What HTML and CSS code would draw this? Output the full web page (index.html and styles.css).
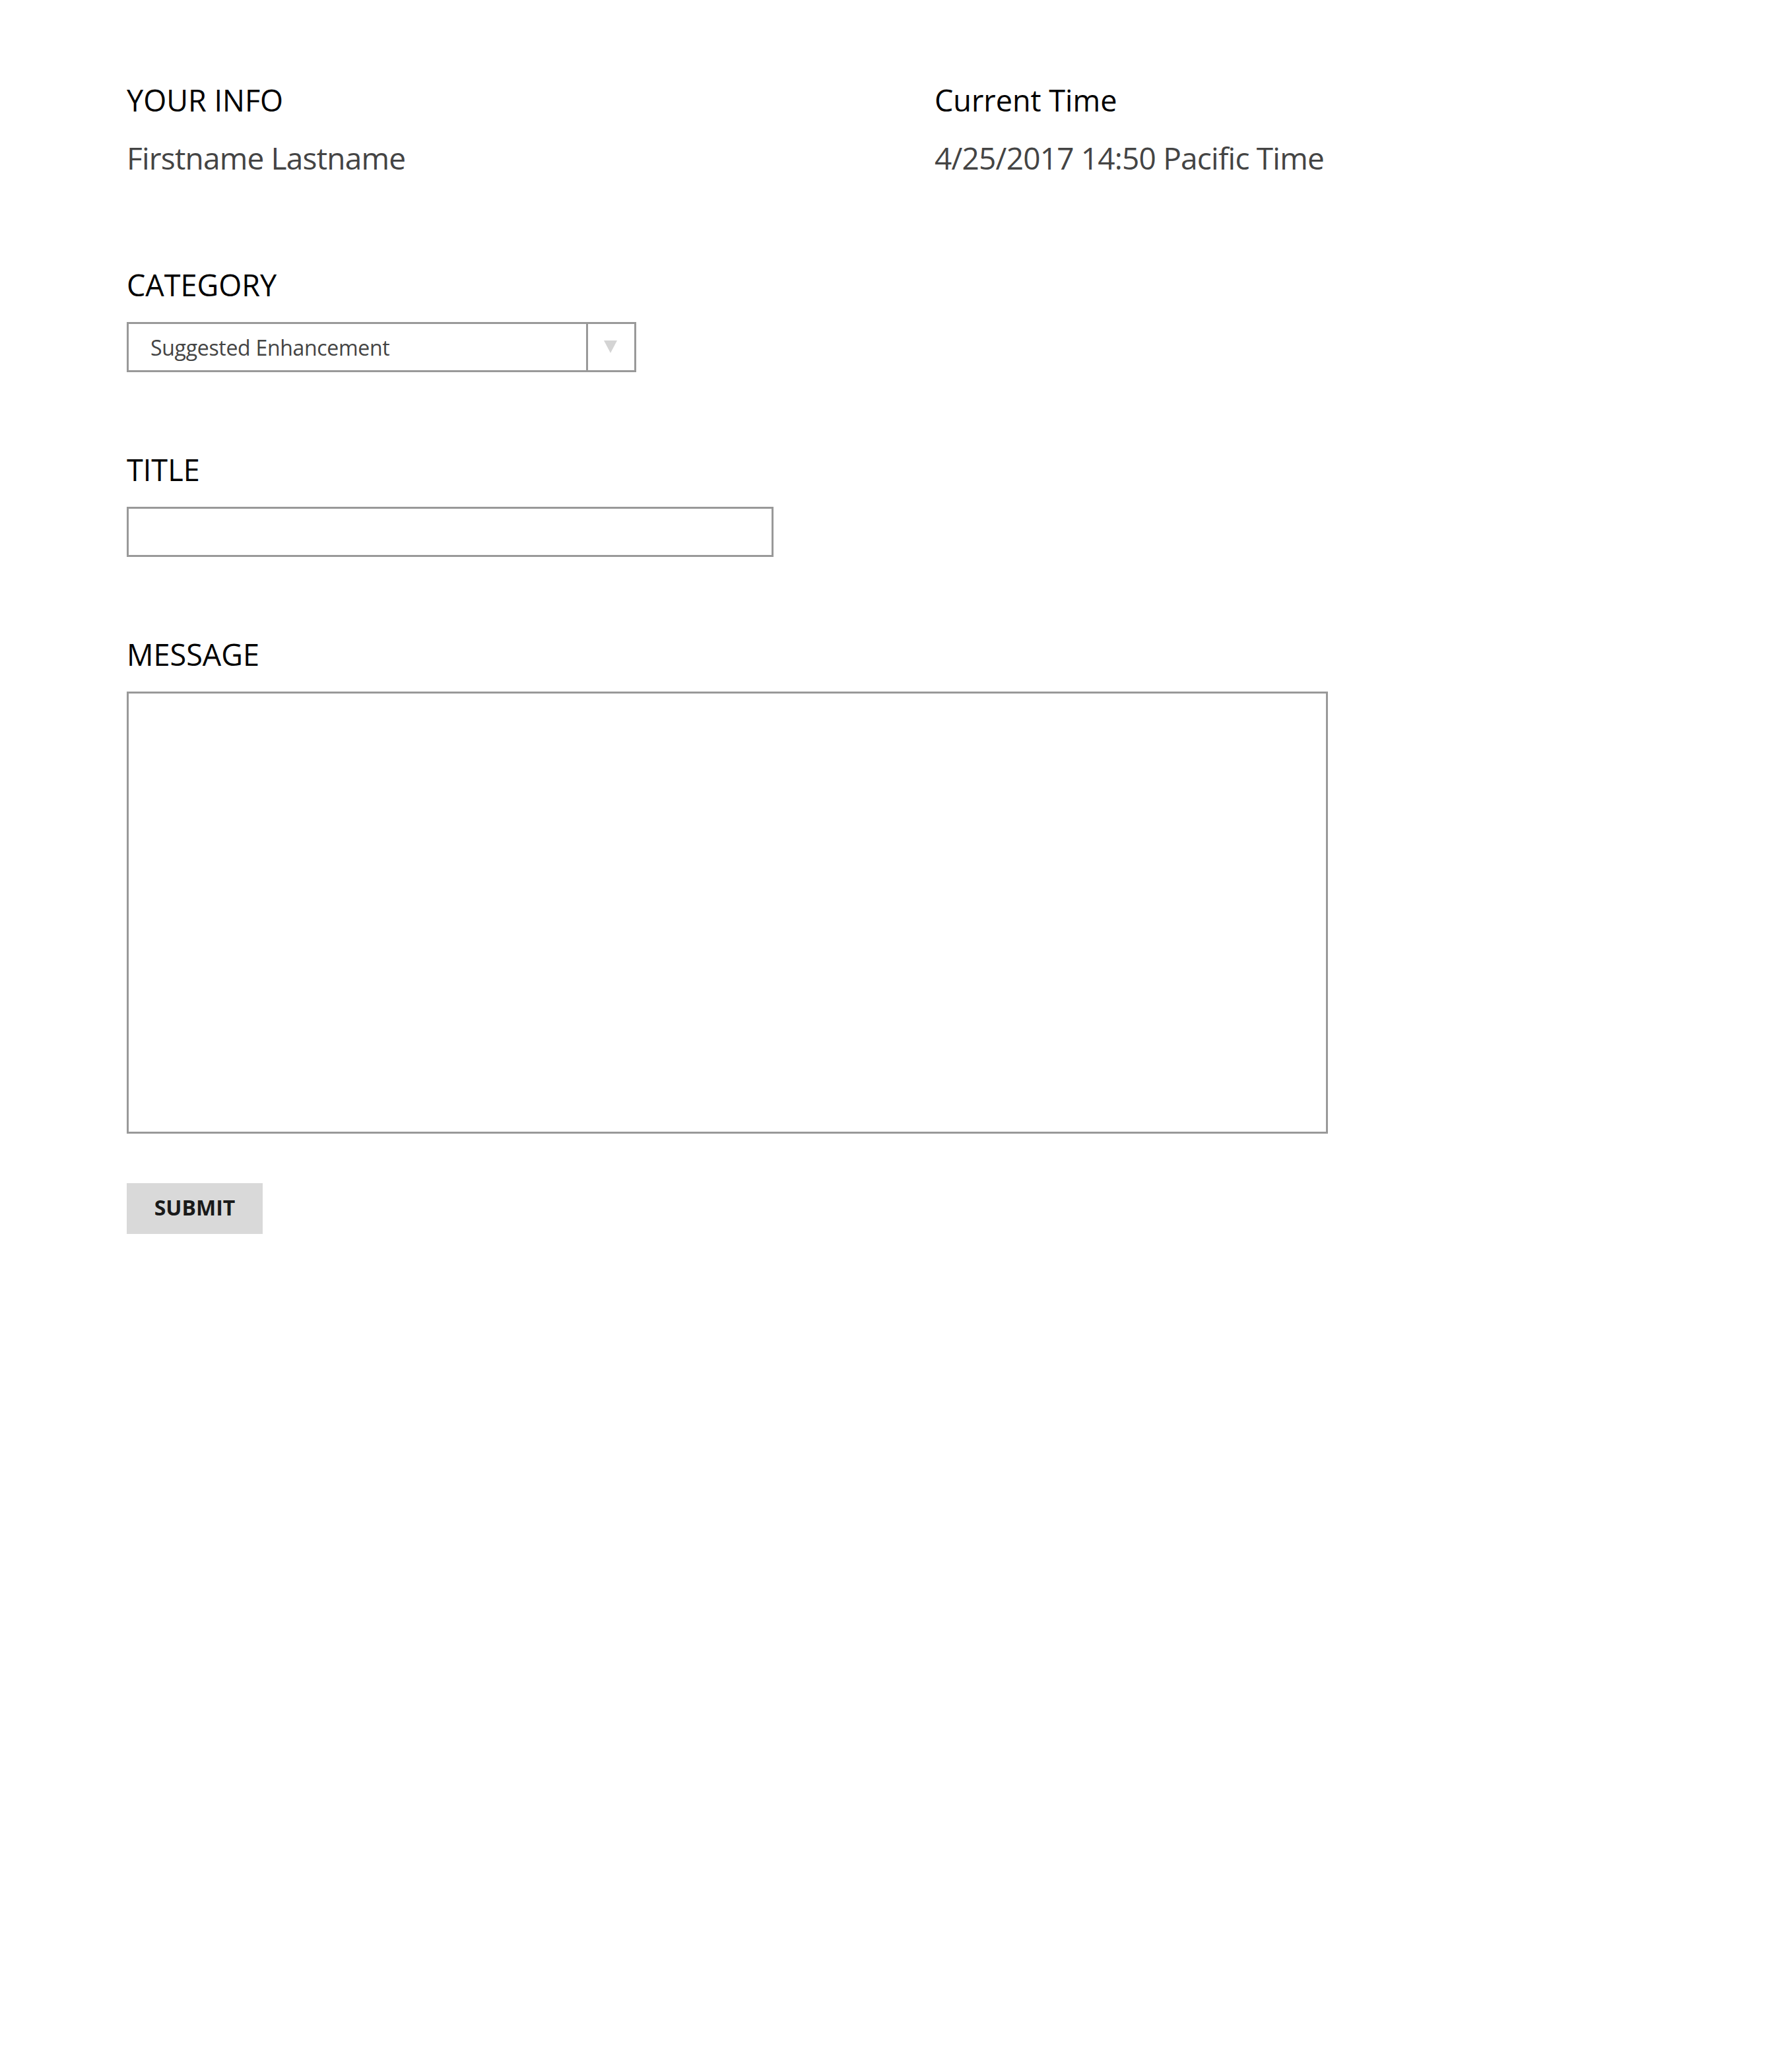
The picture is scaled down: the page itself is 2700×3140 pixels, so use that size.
FILE: index.html
```html
<!DOCTYPE html>
<html lang="en">
<head>
    <meta charset="UTF-8">
    <meta name="viewport" content="width=device-width, initial-scale=1.0">
    <title>Feedback - Submit a Request</title>
    <link rel="stylesheet" href="styles.css">
</head>
<body>

    <div class="page">
        <div class="info-row">
            <div class="info-block">
                <div class="info-label">YOUR INFO</div>
                <div class="info-value">Firstname Lastname</div>
            </div>
            <div class="info-block">
                <div class="info-label">Current Time</div>
                <div class="info-value">4/25/2017 14:50 Pacific Time</div>
            </div>
        </div>

        <form class="feedback-form" onsubmit="return false;">
            <div class="field">
                <label class="field-label" for="category">CATEGORY</label>
                <div class="select-box">
                    <select id="category">
                        <option>Suggested Enhancement</option>
                        <option>Bug Report</option>
                        <option>Question</option>
                    </select>
                    <span class="select-arrow"></span>
                </div>
            </div>

            <div class="field">
                <label class="field-label" for="title">TITLE</label>
                <input type="text" id="title" class="title-input">
            </div>

            <div class="field">
                <label class="field-label" for="message">MESSAGE</label>
                <textarea id="message" class="message-input"></textarea>
            </div>

            <button type="submit" class="submit-btn">SUBMIT</button>
        </form>
    </div>

</body>
</html>
```

FILE: styles.css
```css
/* Global styles */
body {
    font-family: 'Open Sans', 'Noto Sans', sans-serif;
    background-color: #fff;
    color: #000;
    margin: 0;
    padding: 0;
}

.page {
    padding: 124px 0 0 192px;
}

/* Info row at the top */
.info-row {
    display: grid;
    grid-template-columns: 1224px auto;
}

.info-label {
    font-size: 45px;
    line-height: 56px;
    color: #000;
}

.info-value {
    margin-top: 29px;
    font-size: 46px;
    line-height: 60px;
    letter-spacing: -0.8px;
    color: #444;
}

/* Form */
.feedback-form {
    margin-top: 135px;
}

.field {
    display: flex;
    flex-direction: column;
    align-items: flex-start;
    margin-bottom: 120px;
}

.field:last-of-type {
    margin-bottom: 75px;
}

.field-label {
    font-size: 45px;
    line-height: 56px;
    margin-bottom: 28px;
}

/* Select box with separate arrow cell */
.select-box {
    position: relative;
    width: 772px;
    height: 76px;
    box-sizing: border-box;
    border: 3px solid #999;
    background-color: #fff;
}

.select-box select {
    appearance: none;
    -webkit-appearance: none;
    width: 100%;
    height: 100%;
    border: none;
    outline: none;
    background: transparent;
    font-family: 'Open Sans', 'Noto Sans', sans-serif;
    font-size: 32px;
    letter-spacing: -0.3px;
    color: #444;
    padding: 0 0 0 33px;
    margin: 0;
}

.select-arrow {
    position: absolute;
    top: 0;
    right: 0;
    width: 70px;
    height: 100%;
    border-left: 3px solid #999;
    pointer-events: none;
}

.select-arrow::after {
    content: "";
    position: absolute;
    left: 24px;
    top: 25px;
    border-left: 10px solid transparent;
    border-right: 10px solid transparent;
    border-top: 19px solid #d4d4d4;
}

/* Inputs */
.title-input,
.message-input {
    box-sizing: border-box;
    border: 3px solid #999;
    border-radius: 0;
    background-color: #fff;
    font-family: 'Open Sans', 'Noto Sans', sans-serif;
    font-size: 33px;
    color: #444;
    outline: none;
    margin: 0;
}

.title-input {
    width: 980px;
    height: 76px;
    padding: 0 20px;
}

.message-input {
    width: 1820px;
    height: 670px;
    padding: 16px 20px;
    resize: none;
}

/* Submit button */
.submit-btn {
    width: 206px;
    height: 77px;
    border: none;
    border-radius: 0;
    background-color: #d9d9d9;
    color: #1a1a1a;
    font-family: 'Open Sans', 'Noto Sans', sans-serif;
    font-weight: 700;
    font-size: 32px;
    padding: 0 0 4px 0;
    cursor: pointer;
}

.submit-btn:hover {
    opacity: 0.9;
}
```
